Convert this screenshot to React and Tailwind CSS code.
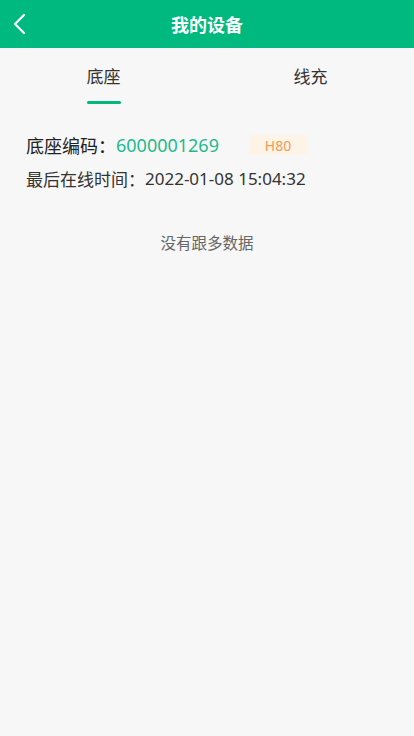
import { useState } from "react";

function Header() {
  return (
    <div className="h-12 bg-[#00b97f] flex items-center relative">
      <button className="absolute left-3 top-0 h-12 flex items-center">
        <svg width="16" height="22" viewBox="0 0 16 22" fill="none">
          <path d="M12 2 L3 11 L12 20" stroke="#fff" strokeWidth="2.2" strokeLinecap="round" strokeLinejoin="round" />
        </svg>
      </button>
      <h1 className="flex-1 text-center text-white text-[18px] font-bold">我的设备</h1>
    </div>
  );
}

function Tabs({ active, onChange }) {
  const tabs = ["底座", "线充"];
  return (
    <div className="flex h-[58px]">
      {tabs.map((t, i) => (
        <button
          key={t}
          onClick={() => onChange(i)}
          className="flex-1 flex flex-col items-center pt-[16px]"
        >
          <span className="text-[17px] leading-6 text-[#333]">{t}</span>
          <span
            className={
              active === i
                ? "mt-[13px] w-[34px] h-[3px] rounded-full bg-[#00b97f]"
                : "mt-[13px] w-[34px] h-[3px]"
            }
          />
        </button>
      ))}
    </div>
  );
}

export default function App() {
  const [active, setActive] = useState(0);
  return (
    <div className="min-h-[736px] bg-[#f7f7f7] font-['Noto_Sans_CJK_SC',sans-serif]">
      <Header />
      <Tabs active={active} onChange={setActive} />
      <div className="px-[26px] pt-[25px]">
        <div className="flex items-center h-7">
          <span className="text-[18px] text-[#222]">底座编码：</span>
          <span className="text-[18px] text-[#1fba8c] font-['Noto_Sans',sans-serif]">6000001269</span>
          <span className="ml-[30px] w-[58px] h-[20px] rounded-[4px] bg-[#fdf3e6] text-[#f19a54] text-[14px] flex items-center justify-center font-['Noto_Sans',sans-serif]">
            H80
          </span>
        </div>
        <div className="mt-[8px] h-6 flex items-center text-[17px] text-[#333]">
          最后在线时间：<span className="font-['Noto_Sans',sans-serif]">2022-01-08 15:04:32</span>
        </div>
      </div>
      <p className="mt-[40px] text-center text-[15.5px] text-[#666]">没有跟多数据</p>
    </div>
  );
}
